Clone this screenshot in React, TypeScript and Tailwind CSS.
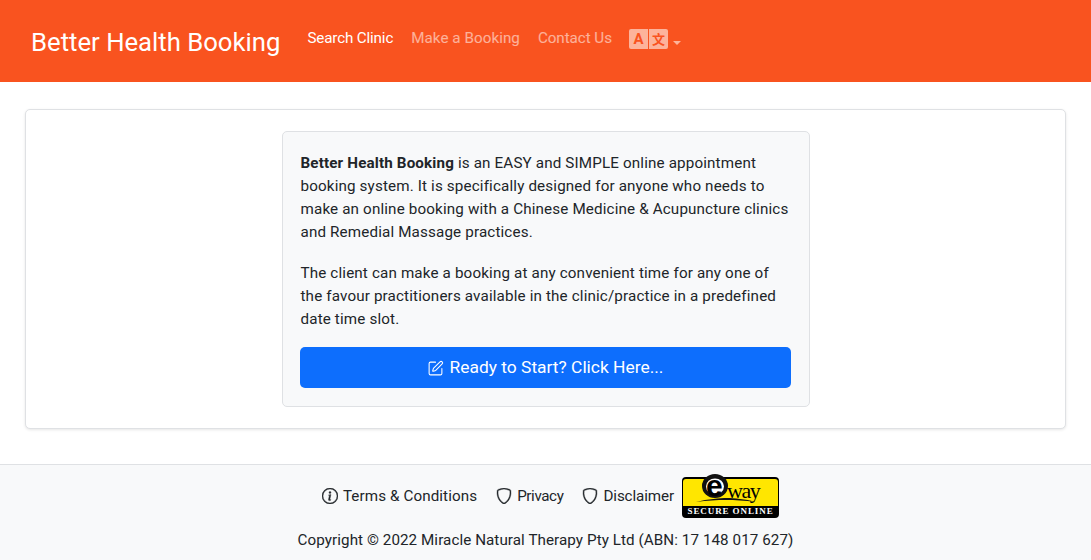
import React from "react";
import { BsInfoCircle, BsShield } from "react-icons/bs";
import { SquarePen } from "lucide-react";

const FooterLink = ({ icon, label, spacing }: { icon: React.ReactNode; label: string; spacing: string }) => (
  <a className="flex items-center gap-[5px] text-[15.2px] text-[#212529]">
    {icon}
    <span className={spacing}>{label}</span>
  </a>
);

const EwayLogo = () => (
  <div className="relative h-[41px] w-[97px] rounded-[4px] bg-black">
    <div className="absolute left-[1px] right-[1px] top-[2px] h-[27px] rounded-t-[3px] bg-[#ffe600]" />
    <svg className="absolute left-0 top-[-4px]" width="97" height="34" viewBox="0 0 97 34">
      <path d="M14 29c12-3 24-4 31-4s18 1 29 4c-12-1.500-21-2-30-2s-19 .5-30 2z" fill="#111" />
      <ellipse cx="33" cy="13" rx="13" ry="12" fill="#111" />
      <ellipse cx="33" cy="13.500" rx="9" ry="8" fill="#fff" />
    </svg>
    <span className="absolute left-[24px] top-[-7px] font-['Liberation_Sans',sans-serif] text-[30px] font-bold leading-[32px] text-black">e</span>
    <span className="absolute left-[45px] top-[3px] font-['Liberation_Serif',serif] text-[22px] leading-[22px] tracking-[-1.5px] text-black">way</span>
    <span className="absolute inset-x-0 bottom-[0px] text-center font-['Liberation_Serif',serif] text-[9px] font-bold leading-[13px] tracking-[0.9px] text-white">SECURE ONLINE</span>
  </div>
);

export default function App() {
  return (
    <div className="min-h-[560px] bg-white font-['Roboto',sans-serif] text-[#212529]">
      <nav className="flex h-[82px] items-start bg-[#f9531f] pl-[31px] pt-[26px]">
        <a className="text-[25.7px] leading-[32px] text-white">Better Health Booking</a>
        <ul className="ml-[27px] flex items-center gap-[18px] pt-[1px] text-[15.2px] leading-[22px]">
          <li className="tracking-[-0.15px] text-white">Search Clinic</li>
          <li className="tracking-[0.05px] text-white/55">Make a Booking</li>
          <li className="tracking-[-0.05px] text-white/55">Contact Us</li>
          <li className="-ml-px flex items-center">
            <span className="flex gap-[1px] pt-[2px]">
              <span className="flex h-[20px] w-[19px] items-center justify-center rounded-l-[2px] bg-[#fdb39b] text-[15px] font-bold leading-none text-[#f9531f]">A</span>
              <span className="flex h-[20px] w-[19px] items-center justify-center rounded-r-[2px] bg-[#fdb39b] pb-[2px] font-['Noto_Sans_CJK_SC',sans-serif] text-[13px] font-bold leading-none text-[#f9531f]">文</span>
            </span>
            <span className="ml-[5px] mt-[10px] h-0 w-0 border-x-[4px] border-t-[4px] border-x-transparent border-t-[#fdb39b]" />
          </li>
        </ul>
      </nav>

      <main className="px-[25px] pt-[27px]">
        <div className="flex justify-center rounded-[5px] border border-[#dfe1e4] bg-white py-[21px] shadow-[0_1px_3px_rgba(0,0,0,0.1)]">
          <div className="w-[528px] rounded-[5px] border border-[#dfe1e4] bg-[#f8f9fa] pb-[18px] pl-[17px] pr-[18px] pt-[20px] text-[15.2px] leading-[23px] tracking-[0.15px]">
            <p className="whitespace-nowrap pl-px">
              <strong>Better Health Booking</strong> is an EASY and SIMPLE online appointment
              <br />
              booking system. It is specifically designed for anyone who needs to
              <br />
              make an online booking with a Chinese Medicine &amp; Acupuncture clinics
              <br />
              and Remedial Massage practices.
            </p>
            <p className="mt-[18px] whitespace-nowrap pl-px">
              The client can make a booking at any convenient time for any one of
              <br />
              the favour practitioners available in the clinic/practice in a predefined
              <br />
              date time slot.
            </p>
            <button className="mt-[16px] flex h-[41px] w-full items-center justify-center gap-[6px] rounded-[5px] bg-[#0d6efd] text-[17.4px] tracking-normal text-white">
              <SquarePen size={17} strokeWidth={1.5} className="mt-[2px]" />
              Ready to Start? Click Here...
            </button>
          </div>
        </div>
      </main>

      <footer className="mt-[35px] h-[96px] border-t border-[#dfe1e4] bg-[#f8f9fa] pt-[12px]">
        <div className="flex items-center justify-center gap-[8px] pl-[10px]">
          <div className="mb-[2px] flex items-center gap-[19px]">
            <FooterLink icon={<BsInfoCircle size={16} strokeWidth={0.4} />} label="Terms & Conditions" spacing="tracking-[0.1px]" />
            <FooterLink icon={<BsShield size={16} strokeWidth={0.4} />} label="Privacy" spacing="tracking-[-0.4px]" />
            <FooterLink icon={<BsShield size={16} strokeWidth={0.4} />} label="Disclaimer" spacing="tracking-[-0.1px]" />
          </div>
          <EwayLogo />
        </div>
        <p className="mt-[11px] text-center text-[15.2px] leading-[22px] tracking-[0.07px]">
          Copyright © 2022 Miracle Natural Therapy Pty Ltd (ABN: 17 148 017 627)
        </p>
      </footer>
    </div>
  );
}
